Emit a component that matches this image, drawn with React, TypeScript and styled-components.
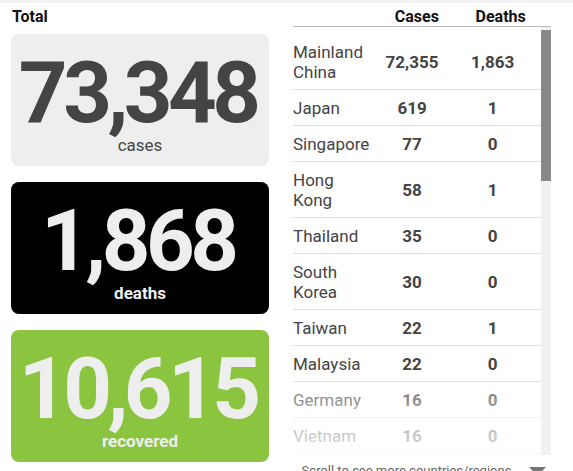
import styled, { createGlobalStyle } from "styled-components";

interface Country {
    name: string;
    cases: string;
    deaths: string;
}

const countries: Country[] = [
    { name: "Mainland China", cases: "72,355", deaths: "1,863" },
    { name: "Japan", cases: "619", deaths: "1" },
    { name: "Singapore", cases: "77", deaths: "0" },
    { name: "Hong Kong", cases: "58", deaths: "1" },
    { name: "Thailand", cases: "35", deaths: "0" },
    { name: "South Korea", cases: "30", deaths: "0" },
    { name: "Taiwan", cases: "22", deaths: "1" },
    { name: "Malaysia", cases: "22", deaths: "0" },
    { name: "Germany", cases: "16", deaths: "0" },
    { name: "Vietnam", cases: "16", deaths: "0" },
    { name: "Australia", cases: "15", deaths: "0" },
    { name: "United States", cases: "15", deaths: "0" },
    { name: "France", cases: "12", deaths: "1" },
    { name: "Macau", cases: "10", deaths: "0" },
    { name: "United Kingdom", cases: "9", deaths: "0" },
    { name: "United Arab Emirates", cases: "9", deaths: "0" },
    { name: "Canada", cases: "8", deaths: "0" },
    { name: "Philippines", cases: "3", deaths: "1" },
    { name: "India", cases: "3", deaths: "0" },
    { name: "Italy", cases: "3", deaths: "0" },
    { name: "Russia", cases: "2", deaths: "0" },
    { name: "Spain", cases: "2", deaths: "0" },
    { name: "Belgium", cases: "1", deaths: "0" },
    { name: "Cambodia", cases: "1", deaths: "0" },
    { name: "Egypt", cases: "1", deaths: "0" },
    { name: "Finland", cases: "1", deaths: "0" },
    { name: "Nepal", cases: "1", deaths: "0" },
    { name: "Sri Lanka", cases: "1", deaths: "0" },
    { name: "Sweden", cases: "1", deaths: "0" },
    { name: "Others", cases: "454", deaths: "0" },
];

const GlobalStyle = createGlobalStyle`
    body {
        margin: 0;
        background: #fff;
        font-family: Roboto, "Liberation Sans", sans-serif;
        color: #444;
        overflow: hidden;
    }
`;

const TopBar = styled.div`
    height: 3px;
    background: #f3f3f3;
`;

const Columns = styled.div`
    display: flex;
    gap: 24px;
    padding: 0 22px 0 11px;
`;

const Column = styled.div`
    width: 258px;
    flex: none;
`;

const Title = styled.div`
    padding-top: 4px;
    height: 19px;
    line-height: 19px;
    font-size: 16px;
    font-weight: 700;
    color: #111;
    padding-left: 1px;
`;

const Cards = styled.div`
    display: flex;
    flex-direction: column;
    gap: 16px;
    margin-top: 8px;
`;

const Card = styled.div<{ $bg: string; $fg: string }>`
    height: 132px;
    box-sizing: border-box;
    padding-top: 17px;
    border-radius: 8px;
    background: ${({ $bg }) => $bg};
    color: ${({ $fg }) => $fg};
    display: flex;
    flex-direction: column;
    align-items: center;
`;

// negative tracking leaves a trailing gap, pad it back so the digits stay centred
const BigNumber = styled.div`
    font-size: 85px;
    line-height: 84px;
    font-weight: 700;
    letter-spacing: -4.5px;
    margin-right: 4.5px;
`;

const CardLabel = styled.div<{ $bold?: boolean }>`
    font-size: 17px;
    line-height: 20px;
    font-weight: ${({ $bold }) => ($bold ? 700 : 400)};
`;

const Grid = styled.div`
    display: grid;
    grid-template-columns: 32% 32% 33%;
    align-items: center;
`;

const HeaderRow = styled(Grid)`
    padding-top: 4px;
    height: 19px;
    line-height: 19px;
    border-bottom: 1px solid #bbb;
    font-size: 16px;
    font-weight: 700;
    color: #111;
`;

const HeadCell = styled.div`
    text-align: center;
`;

const ListWrap = styled.div`
    position: relative;
    height: 428px;
    display: flex;
`;

const List = styled.div`
    flex: 1;
    min-width: 0;
    overflow: hidden;
    padding-top: 7px;
`;

const ScrollTrack = styled.div`
    width: 10px;
    flex: none;
    background: #f1f1f1;
`;

const ScrollThumb = styled.div`
    margin-top: 3px;
    height: 151px;
    background: #888;
`;

const Row = styled(Grid)`
    padding: 8px 0 7px;
    border-bottom: 1px solid #ddd;
    font-size: 17px;
    line-height: 20px;
`;

const Name = styled.div`
    color: #444;
`;

const Num = styled.div`
    text-align: center;
    font-weight: 700;
    color: #444;
`;

const Fade = styled.div`
    position: absolute;
    left: 0;
    right: 10px;
    bottom: 0;
    height: 86px;
    pointer-events: none;
    background: linear-gradient(to bottom, rgba(255, 255, 255, 0) 0%, rgba(255, 255, 255, 0.5) 45%, rgba(255, 255, 255, 0.85) 100%);
`;

const Footer = styled.div`
    display: flex;
    justify-content: center;
    align-items: center;
    gap: 18px;
    margin-top: 6px;
    padding-left: 4px;
    font-size: 13px;
    line-height: 20px;
    color: #666;
`;

const Arrow = () => (
    <svg width="17" height="9" viewBox="0 0 17 9">
        <polygon points="0,0 17,0 8.5,9" fill="#777" />
    </svg>
);

export default function App() {
    return (
        <>
            <GlobalStyle />
            <TopBar />
            <Columns>
                <Column>
                    <Title>Total</Title>
                    <Cards>
                        <Card $bg="#eeeeee" $fg="#444">
                            <BigNumber>73,348</BigNumber>
                            <CardLabel>cases</CardLabel>
                        </Card>
                        <Card $bg="#000" $fg="#eee">
                            <BigNumber>1,868</BigNumber>
                            <CardLabel $bold>deaths</CardLabel>
                        </Card>
                        <Card $bg="#8bc540" $fg="#eee">
                            <BigNumber>10,615</BigNumber>
                            <CardLabel $bold>recovered</CardLabel>
                        </Card>
                    </Cards>
                </Column>
                <Column>
                    <HeaderRow>
                        <div />
                        <HeadCell>Cases</HeadCell>
                        <HeadCell>Deaths</HeadCell>
                    </HeaderRow>
                    <ListWrap>
                        <List>
                            {countries.map((c) => (
                                <Row key={c.name}>
                                    <Name>{c.name}</Name>
                                    <Num>{c.cases}</Num>
                                    <Num>{c.deaths}</Num>
                                </Row>
                            ))}
                        </List>
                        <ScrollTrack>
                            <ScrollThumb />
                        </ScrollTrack>
                        <Fade />
                    </ListWrap>
                    <Footer>
                        <span>Scroll to see more countries/regions</span>
                        <Arrow />
                    </Footer>
                </Column>
            </Columns>
        </>
    );
}
